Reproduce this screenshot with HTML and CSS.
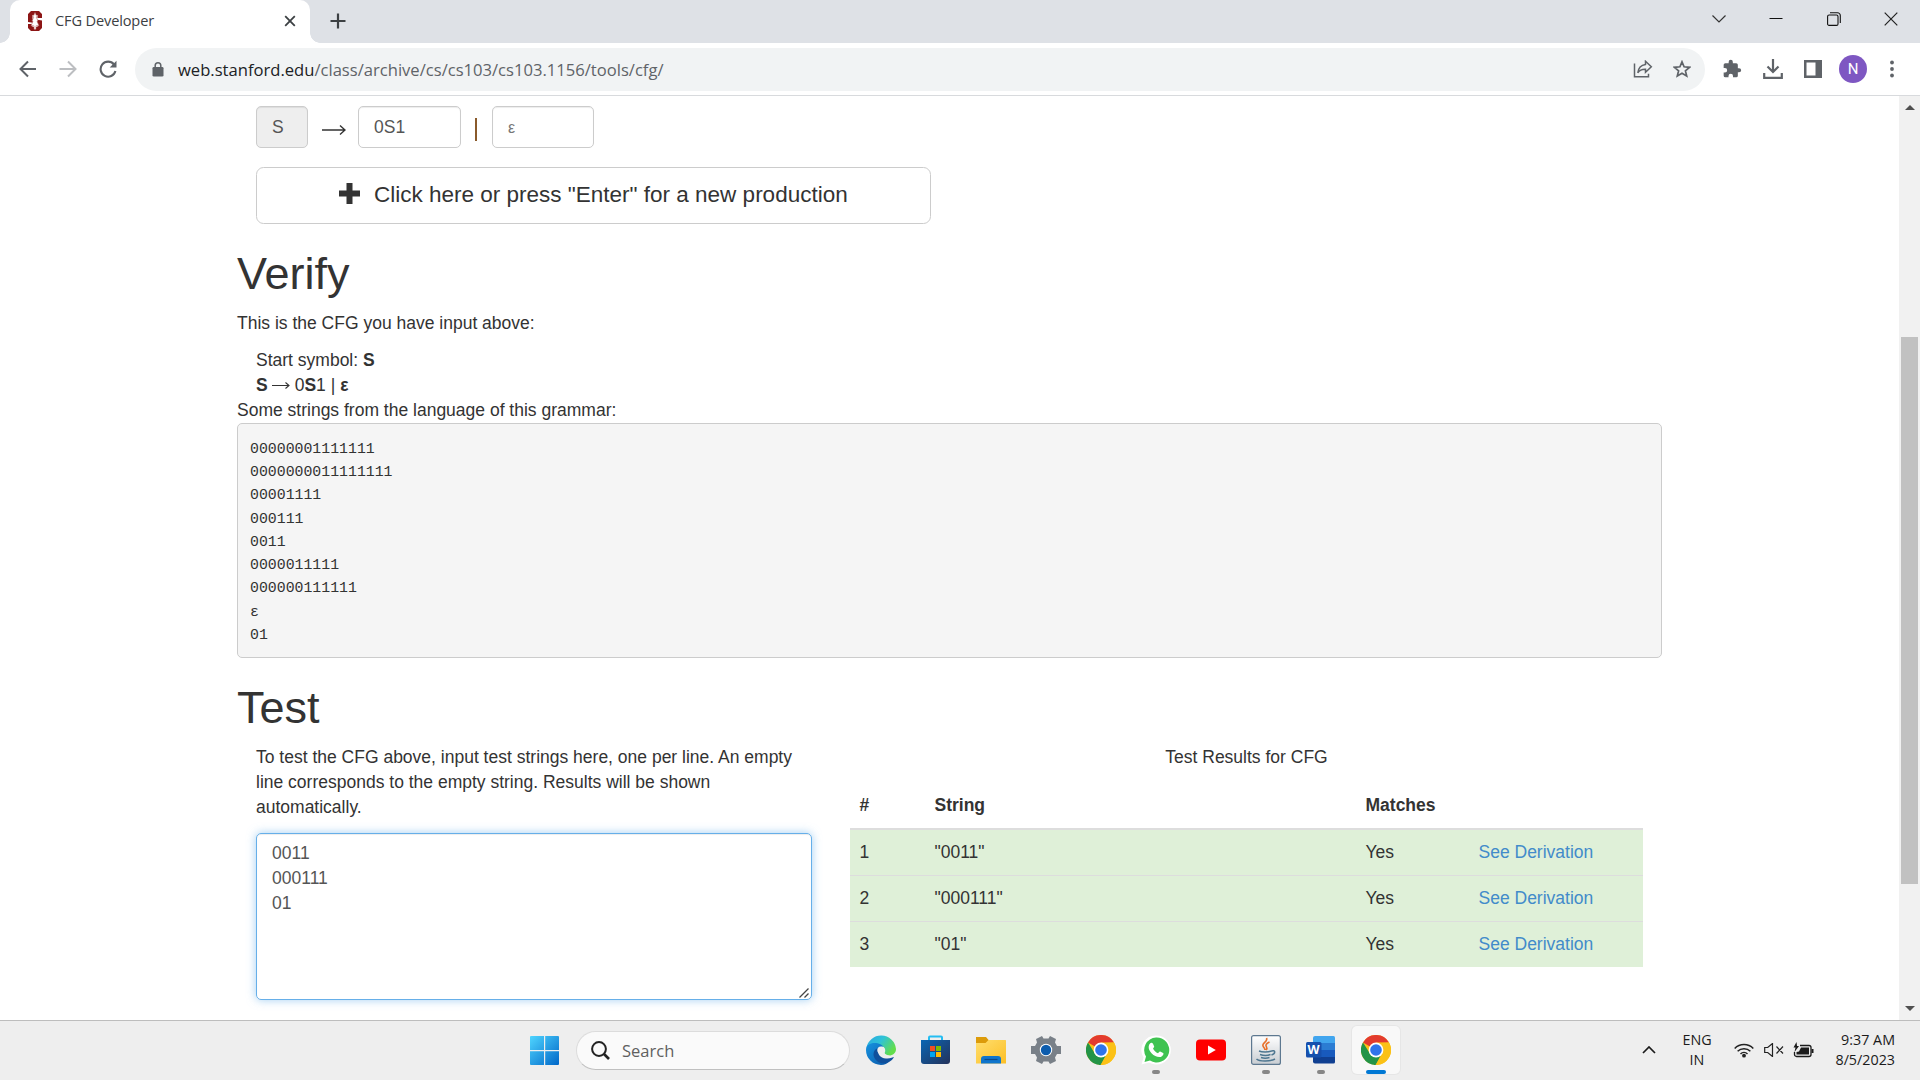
FILE: index.html
```html
<!DOCTYPE html>
<html lang="en">
<head>
<meta charset="utf-8">
<title>CFG Developer</title>
<link rel="stylesheet" href="styles.css">
</head>
<body>
<svg width="0" height="0" class="defs">
  <defs>
    <linearGradient id="win" x1="0" y1="0" x2="1" y2="1"><stop offset="0" stop-color="#4fd5ff"/><stop offset="1" stop-color="#0067c8"/></linearGradient>
    <linearGradient id="edgeTop" x1="0" y1="0" x2="1" y2=".5"><stop offset="0" stop-color="#2aa6e0"/><stop offset=".5" stop-color="#2fc2d8"/><stop offset="1" stop-color="#62dd4c"/></linearGradient>
    <linearGradient id="edgeLow" x1="0" y1="0" x2="1" y2="1"><stop offset="0" stop-color="#1593e0"/><stop offset="1" stop-color="#0c57a8"/></linearGradient>
    <linearGradient id="store" x1="0" y1="0" x2="1" y2="1"><stop offset="0" stop-color="#0a66b4"/><stop offset="1" stop-color="#24325a"/></linearGradient>
    <linearGradient id="folder" x1="0" y1="0" x2="1" y2="1"><stop offset="0" stop-color="#ffde6e"/><stop offset="1" stop-color="#fcbf25"/></linearGradient>
    <linearGradient id="java" x1="0" y1="0" x2="0" y2="1"><stop offset="0" stop-color="#ffffff"/><stop offset="1" stop-color="#c8cdd2"/></linearGradient>
    <symbol id="chrome" viewBox="0 0 30 30">
      <circle cx="15" cy="15" r="15" fill="#fbc116"/>
      <path d="M15 15 2 7.500A15 15 0 0 1 28 7.500L15 8Z" fill="#e33b2e"/>
      <path d="M2 7.500 8.900 18.500 15 22 15 30A15 15 0 0 1 2 7.500Z" fill="#239447"/>
      <path d="M21 18.500 15 30 13 30 14 20Z" fill="#239447"/>
      <path d="M21 18.500 14.500 30A15 15 0 0 0 28 7.500H15Z" fill="#fbc116"/>
      <circle cx="15" cy="15" r="7.400" fill="#fff"/><circle cx="15" cy="15" r="5.800" fill="#2f74ea"/>
    </symbol>
  </defs>
</svg>

<header class="tabstrip">
  <div class="tab">
    <svg class="favicon" width="14" height="20" viewBox="0 0 14 20"><path d="M3 0h8l3 3v4H9.500V4h-5v4L14 9.500V17l-3 3H3l-3-3v-4h4.500v3h5v-3.500L0 11V3Z" fill="#8c1515"/><path d="m7 1.500 1.800 4L8.200 6l1.800 4-1 .3 2 4.500H8v3.500H6v-3.500H3l2-4.500-1-.3L5.800 6l-.6-.5Z" fill="#fff" stroke="#b86a6a" stroke-width=".6"/></svg>
    <span class="tab-title">CFG Developer</span>
    <svg class="tab-close" width="12" height="12" viewBox="0 0 12 12"><path d="m1.200 1.200 9.600 9.600m0-9.600-9.600 9.600" stroke="#3c4043" stroke-width="1.800"/></svg>
  </div>
  <svg class="new-tab" width="16" height="16" viewBox="0 0 16 16"><path d="M8 .5v15M.5 8h15" stroke="#3c4043" stroke-width="2.200"/></svg>
  <div class="window-buttons">
    <svg width="14" height="14" viewBox="0 0 14 14"><path d="m.5 3.500 6.500 6.500 6.500-6.500" fill="none" stroke="#333" stroke-width="1.200"/></svg>
    <svg width="14" height="14" viewBox="0 0 14 14"><path d="M.5 6.500h13" stroke="#111" stroke-width="1"/></svg>
    <svg width="14" height="14" viewBox="0 0 14 14"><g fill="none" stroke="#111" stroke-width="1.100"><rect x=".6" y="3" width="10.400" height="10.400" rx="1.500"/><path d="M3 .8h7.500a2.800 2.800 0 0 1 2.800 2.800V11"/></g></svg>
    <svg width="14" height="14" viewBox="0 0 14 14"><path d="m.7.7 12.600 12.600m0-12.600L.7 13.300" stroke="#222" stroke-width="1.200"/></svg>
  </div>
</header>

<nav class="toolbar">
  <div class="nav-buttons">
    <svg width="18" height="18" viewBox="0 0 18 18"><path d="M17 9H2M9 1.500 1.500 9 9 16.500" fill="none" stroke="#5f6368" stroke-width="2"/></svg>
    <svg width="18" height="18" viewBox="0 0 18 18"><path d="M.5 9H16M9 1.500 16.500 9 9 16.500" fill="none" stroke="#bcbec1" stroke-width="2"/></svg>
    <svg width="18" height="18" viewBox="0 0 18 18"><path d="M15 4.500A7.500 7.500 0 1 0 16.400 11" fill="none" stroke="#5f6368" stroke-width="2.100"/><path d="M17.500.7V7.500H10.700Z" fill="#5f6368"/></svg>
  </div>
  <div class="omnibox">
    <svg class="lock" width="12" height="15" viewBox="0 0 12 15"><rect x=".5" y="5" width="11" height="9.500" rx="1.300" fill="#5f6368"/><path d="M3.200 6V3.600a2.800 2.800 0 0 1 5.600 0V6" fill="none" stroke="#5f6368" stroke-width="1.500"/></svg>
    <span class="url"><b>web.stanford.edu</b>/class/archive/cs/cs103/cs103.1156/tools/cfg/</span>
    <svg class="share" width="20" height="18" viewBox="0 0 20 18"><g fill="none" stroke="#5f6368" stroke-width="1.500"><path d="M1.500 3.500v13.300H15.500v-3"/><path d="M12.500 1.300 18.300 6.800 12.500 12.200V9.300C9.300 9.200 6.700 10 4.800 12.800 5.300 8.500 7.800 5 12.500 4.400Z"/></g></svg>
    <svg class="star" width="18" height="18" viewBox="0 0 18 18"><path d="m9 1.800 2.100 5 5.400.5-4.100 3.500 1.300 5.300L9 13.300l-4.700 2.800 1.300-5.300L1.500 7.300l5.400-.5Z" fill="none" stroke="#5f6368" stroke-width="1.700"/></svg>
  </div>
  <div class="actions">
    <svg width="20" height="20" viewBox="0 0 24 24"><path d="M20.500 11H19V7a2 2 0 0 0-2-2h-4V3.500a2.500 2.500 0 0 0-5 0V5H4a2 2 0 0 0-2 2v3.800h1.500a2.700 2.700 0 0 1 0 5.400H2V20a2 2 0 0 0 2 2h3.800v-1.500a2.700 2.700 0 0 1 5.400 0V22H17a2 2 0 0 0 2-2v-4h1.500a2.500 2.500 0 0 0 0-5Z" fill="#5f6368"/></svg>
    <svg width="20" height="20" viewBox="0 0 20 20"><path d="M10 0v12M4.500 7.500l5.500 5.500 5.500-5.500M1.200 14v4.800H18.800V14" fill="none" stroke="#5f6368" stroke-width="2.200"/></svg>
    <svg width="18" height="18" viewBox="0 0 18 18"><path d="M0 0h18v18H0ZM2.500 2.500v13h9v-13Z" fill="#5f6368" fill-rule="evenodd"/></svg>
    <span class="avatar">N</span>
    <svg width="4" height="18" viewBox="0 0 4 18"><g fill="#5f6368"><circle cx="2" cy="2.500" r="1.900"/><circle cx="2" cy="9" r="1.900"/><circle cx="2" cy="15.500" r="1.900"/></g></svg>
  </div>
</nav>

<div class="viewport">
  <main class="page">
    <div class="production">
      <span class="field start">S</span>
      <svg class="arrow" width="24" height="12" viewBox="0 0 24 12"><path d="M0 6h23M18 1.500 23 6l-5 4.500" fill="none" stroke="#333" stroke-width="1.400"/></svg>
      <span class="field rule">0S1</span>
      <span class="bar"></span>
      <span class="field rule empty">ε</span>
    </div>
    <div class="add">
      <svg width="21" height="21" viewBox="0 0 21 21"><path d="M7.500 0h6v7.500H21v6h-7.500V21h-6v-7.500H0v-6h7.500Z" fill="#333"/></svg>
      <span>Click here or press "Enter" for a new production</span>
    </div>

    <h1 class="heading">Verify</h1>
    <p class="intro">This is the CFG you have input above:</p>
    <div class="grammar">
      <div>Start symbol: <b>S</b></div>
      <div class="grammar-rule"><b>S</b><svg width="18" height="10" viewBox="0 0 18 10"><path d="M0 5.500h17M13.500 2.500 17 5.500l-3.500 3" fill="none" stroke="#333" stroke-width="1.100"/></svg><span>0<b>S</b>1 | <b>ε</b></span></div>
    </div>
    <div>Some strings from the language of this grammar:</div>
    <pre class="strings">00000001111111
0000000011111111
00001111
000111
0011
0000011111
000000111111
ε
01</pre>

    <h1 class="heading test-heading">Test</h1>
    <div class="columns">
      <section class="inputs">
        <p class="help">To test the CFG above, input test strings here, one per line. An empty line corresponds to the empty string. Results will be shown automatically.</p>
        <div class="textarea">0011<br>000111<br>01<svg class="grip" width="10" height="10" viewBox="0 0 10 10"><path d="M.5 9.500 9.500.5M5.500 9.500l4-4" stroke="#444" stroke-width="1.300"/></svg></div>
      </section>
      <section class="results">
        <div class="caption">Test Results for CFG</div>
        <div class="row head"><span>#</span><span>String</span><span>Matches</span><span></span></div>
        <div class="row"><span>1</span><span>"0011"</span><span>Yes</span><a>See Derivation</a></div>
        <div class="row"><span>2</span><span>"000111"</span><span>Yes</span><a>See Derivation</a></div>
        <div class="row"><span>3</span><span>"01"</span><span>Yes</span><a>See Derivation</a></div>
      </section>
    </div>
  </main>
  <div class="scrollbar">
    <svg width="10" height="5" viewBox="0 0 10 5"><path d="M0 5 5 0l5 5Z" fill="#505050"/></svg>
    <div class="thumb"></div>
    <svg class="down" width="10" height="5" viewBox="0 0 10 5"><path d="M0 0 5 5l5-5Z" fill="#505050"/></svg>
  </div>
</div>

<footer class="taskbar">
  <svg class="start-logo" width="30" height="30" viewBox="0 0 30 30"><path d="M1 0h13v14H0V1a1 1 0 0 1 1-1Zm14.200 0H28a1 1 0 0 1 1 1v13H15.200ZM0 15.200h14V29H1a1 1 0 0 1-1-1Zm15.200 0H29V28a1 1 0 0 1-1 1H15.200Z" fill="url(#win)"/></svg>
  <div class="search">
    <svg width="19" height="19" viewBox="0 0 19 19"><circle cx="8" cy="8" r="6.900" fill="none" stroke="#222" stroke-width="2"/><path d="m13 13 5 5" stroke="#222" stroke-width="2.600"/></svg>
    <span>Search</span>
  </div>
  <div class="apps">
    <span class="app"><svg width="30" height="30" viewBox="0 0 30 30"><path d="M.3 13A15 15 0 0 1 30 14c0 4-3 6.500-7 6.500-3 0-5-1-4.500-2.500 1.500-2 1-6-3-7C9 9.500 3 10 .3 13Z" fill="url(#edgeTop)"/><path d="M0 15C0 10 4 8 8.500 8c4.500 0 8 2 9 4-5-1-7 3-6 7 1 5 6 8 12 7-2 2.500-5 4-8.500 4A15 15 0 0 1 0 15Z" fill="url(#edgeLow)"/><path d="M11.500 13c-4 2-5.500 7-2 11.500C13 29 19 29 23 27c2-1 4-3 5-5-1 0-4 2-8 1.500-6-.5-9-5-8.500-10.500Z" fill="#10509c"/><circle cx="15" cy="15" r="3.600" fill="#eee"/><path d="M15 18c1 5 8 5 12.500 3.200C23 21 19 20 18 17Z" fill="#eee"/></svg></span>
    <span class="app"><svg width="30" height="30" viewBox="0 0 30 30"><path d="M8 6V2.500A1 1 0 0 1 9 1.500H20a1 1 0 0 1 1 1V6" fill="none" stroke="#24bdf2" stroke-width="2"/><path d="M0 5h29v21a3 3 0 0 1-3 3H3a3 3 0 0 1-3-3Z" fill="url(#store)"/><path d="M9 11h5v5H9Z" fill="#f25022"/><path d="M15 11h5v5h-5Z" fill="#7fba00"/><path d="M9 17h5v5H9Z" fill="#00a4ef"/><path d="M15 17h5v5h-5Z" fill="#ffb900"/></svg></span>
    <span class="app"><svg width="30" height="30" viewBox="0 0 30 30"><path d="M0 2h10l3 3.500h16a1 1 0 0 1 1 1V10H0Z" fill="#dc9b0a"/><path d="M0 8h9.500l3-3H29a1 1 0 0 1 1 1v22.500H0Z" fill="url(#folder)"/><path d="M5 28.500V24a3 3 0 0 1 3-3h14a3 3 0 0 1 3 3v4.500Z" fill="#0f75cc"/><path d="M8.500 24.500h13" stroke="#0b4a8a" stroke-width="1.200"/></svg></span>
    <span class="app"><svg width="30" height="30" viewBox="0 0 30 30"><path d="m11 1 1.500 2.500h5L19 1l6 3-1 3.500 2 3.500h4v8h-4l-2 3.500 1 3.500-6 3-1.500-2.500h-5L11 29l-6-3 1-3.500L4 19H0v-8h4l2-3.500L5 4Z" fill="#798088"/><circle cx="15" cy="15" r="6.200" fill="#fff"/><circle cx="15" cy="15" r="5.200" fill="#0c5cad"/></svg></span>
    <span class="app"><svg width="30" height="30"><use href="#chrome"/></svg></span>
    <span class="app running"><svg width="30" height="30" viewBox="0 0 30 30"><path d="M15 .5A14.500 14.500 0 1 1 8 27.500L.5 29.500l2-7A14.500 14.500 0 0 1 15 .5Z" fill="#fff"/><path d="M15 2.500A12.500 12.500 0 1 1 9 25.500L3.500 27 5 21.500A12.500 12.500 0 0 1 15 2.500Z" fill="#3fc351"/><path d="M9 8.500c1-1.300 2.300-1 3 .3l1.200 2.700c.2.700-1 1.600-1.200 2.100 1 2.200 2.800 3.800 5 4.700.7-.5 1.300-2 2.200-1.700l2.900 1.500c1 .7-.3 3.300-2.200 3.800-5.500 1.500-13-5.500-12.200-10.400.2-1.200.5-2.200 1.300-3Z" fill="#fff"/></svg></span>
    <span class="app"><svg width="30" height="30" viewBox="0 0 30 30"><rect y="4.500" width="30" height="21" rx="4" fill="#f00"/><path d="M12 10.500v9l7.800-4.500Z" fill="#fff"/></svg></span>
    <span class="app running"><svg width="30" height="30" viewBox="0 0 30 30"><rect x=".6" y=".6" width="28.800" height="28.800" rx="2" fill="url(#java)" stroke="#5d7890" stroke-width="1.200"/><path d="M15.500 3c2 3.500-5 5-3.500 8 .5 1.500 2 2 2 4M18.500 7c-3 1.500-4.500 3-3 5 1 1.500.5 2-.5 3" fill="none" stroke="#e8702a" stroke-width="1.600"/><path d="M8 16c3 1.200 9 1.200 12.500 0M9 19.500c3 1 8 1 10.500 0M10 22.500c2.500.8 6 .8 8.500 0M5.500 24c3 2.800 14 2.500 18.500 0M20.500 16c4-1.500 4.500 2.500 0 4" fill="none" stroke="#4d7690" stroke-width="1.500"/></svg></span>
    <span class="app running"><svg width="30" height="30" viewBox="0 0 30 30"><path d="M7 8V3a2 2 0 0 1 2-2h18.500A1.500 1.500 0 0 1 29 2.500V8Z" fill="#41a5ee"/><path d="M7 8h22v7H7Z" fill="#2b7cd3"/><path d="M7 15h22v7H7Z" fill="#185abd"/><path d="M7 22h22v5a1.500 1.500 0 0 1-1.500 1.500H9a2 2 0 0 1-2-2Z" fill="#103f91"/><rect y="7" width="15.500" height="15.500" rx="1.500" fill="#1650ad"/><text x="7.600" y="18.800" class="word-letter">W</text></svg></span>
    <span class="app running active"><svg width="30" height="30"><use href="#chrome"/></svg></span>
  </div>
  <div class="tray">
    <svg class="caret" width="14" height="8" viewBox="0 0 14 8"><path d="m1 7 6-6 6 6" fill="none" stroke="#1b1b1b" stroke-width="1.700"/></svg>
    <div class="lang">ENG<br>IN</div>
    <svg class="wifi" width="20" height="16" viewBox="0 0 20 16"><g fill="none" stroke="#222" stroke-width="1.500"><path d="M.7 6.500a13 13 0 0 1 18.600 0M3.600 9.300a9 9 0 0 1 12.800 0M6.500 12a5 5 0 0 1 7 0"/></g><circle cx="10" cy="13.700" r="1.900" fill="#222"/></svg>
    <svg class="volume" width="20" height="14" viewBox="0 0 20 14"><path d="M.7 4.500h3l4.800-4v13l-4.800-4h-3ZM12.500 3.500l6.500 7m0-7-6.500 7" fill="none" stroke="#222" stroke-width="1.200"/></svg>
    <svg class="battery" width="21" height="16" viewBox="0 0 21 16"><path d="M7 3.500h9a2 2 0 0 1 2 2v7a2 2 0 0 1-2 2H3.500a2 2 0 0 1-2-2V10" fill="none" stroke="#1b1b1b" stroke-width="1.300"/><path d="M8 5.500h8v7H3.500V10L6 9.500ZM18.500 7H20.500v4h-2Z" fill="#1b1b1b"/><path d="M3.500 0 .5 5.500h2L1.500 10 6 4H4Z" fill="#1b1b1b"/></svg>
    <div class="clock">9:37 AM<br>8/5/2023</div>
  </div>
</footer>
</body>
</html>
```
FILE: styles.css
```css
* { box-sizing: border-box; }
body {
  margin: 0;
  width: 1920px;
  height: 1080px;
  overflow: hidden;
  display: flex;
  flex-direction: column;
  font-family: "Liberation Sans", Arial, sans-serif;
  font-size: 17.5px;
  line-height: 25px;
  color: #333;
  background: #fff;
}
svg { display: block; flex: none; }
.defs { position: absolute; }

/* Browser chrome */
.tabstrip {
  height: 43px;
  flex: none;
  display: flex;
  align-items: center;
  background: #dee1e6;
  padding-left: 10px;
  font-family: "Open Sans", sans-serif;
}
.tab {
  position: relative;
  width: 300px;
  height: 43px;
  display: flex;
  align-items: center;
  padding: 0 14px 1px 18px;
  background: #fff;
  border-radius: 10px 10px 0 0;
}
.tab::before,
.tab::after {
  content: "";
  position: absolute;
  bottom: 0;
  width: 10px;
  height: 10px;
}
.tab::before { left: -10px; background: radial-gradient(circle at 0 0, #dee1e6 9.5px, #fff 10px); }
.tab::after { right: -10px; background: radial-gradient(circle at 100% 0, #dee1e6 9.5px, #fff 10px); }
.tab-title { margin: -1px 0 0 13px; flex: 1; font-size: 14.6px; letter-spacing: -.15px; color: #3c4043; }
.new-tab { margin: 0 0 1px 19.5px; }
.window-buttons { margin-left: auto; display: flex; gap: 43.5px; padding: 0 22px 5px 0; }

.toolbar {
  height: 53px;
  flex: none;
  display: flex;
  align-items: center;
  padding-left: 19px;
  border-bottom: 1px solid #d8dadd;
  font-family: "Open Sans", sans-serif;
}
.nav-buttons { display: flex; gap: 22px; width: 116px; }
.omnibox {
  width: 1570px;
  height: 43px;
  display: flex;
  align-items: center;
  padding: 0 14px 0 17px;
  border-radius: 22px;
  background: #f1f3f4;
}
.url { margin-left: 14px; flex: 1; font-size: 16.6px; color: #5f6368; white-space: nowrap; }
.url b { font-weight: 400; color: #202124; }
.star { margin-left: 20px; }
.actions { display: flex; align-items: center; margin-left: 17px; }
.actions svg:nth-child(2) { margin-left: 21px; }
.actions svg:nth-child(3) { margin-left: 21px; }
.avatar {
  width: 28px;
  height: 28px;
  margin: 0 23px 0 17px;
  border-radius: 50%;
  background: #7e57c2;
  color: #fff;
  font: 15px/28px Roboto, sans-serif;
  text-align: center;
}

/* Page */
.viewport { height: 924px; flex: none; display: flex; }
.page { width: 1899px; padding: 9.5px 237px 0; }
.production { display: flex; align-items: center; margin-left: 19px; height: 43px; }
.field {
  height: 42.5px;
  padding: 0 15px;
  border: 1px solid #ccc;
  border-radius: 5px;
  box-shadow: inset 0 1px 1px rgba(0,0,0,.075);
  color: #555;
  line-height: 41px;
}
.start { width: 52px; background: #eee; }
.arrow { margin: 5px 12.5px 0 13.5px; }
.rule { width: 103px; }
.bar { width: 2px; height: 23px; margin: 4px 15px 0 14px; background: #8a5a2b; }
.empty { width: 102px; font-size: 16px; color: #777; }
.add {
  display: flex;
  align-items: center;
  width: 675px;
  height: 57px;
  margin: 18px 0 0 19px;
  padding: 0 0 2px 82px;
  border: 1px solid #ccc;
  border-radius: 7.5px;
  font-size: 22.5px;
}
.add svg { margin-bottom: 1px; }
.add span { margin-left: 14px; }
.heading { margin: 25px 0 12.5px; font-size: 45px; font-weight: 400; line-height: 49.5px; }
.intro { margin: 0 0 12px; }
.grammar { margin-left: 19px; }
.grammar-rule { display: flex; align-items: center; gap: 4.5px; }
.strings {
  height: 235px;
  margin: 0;
  padding: 14.4px 12px 0;
  border: 1px solid #ccc;
  border-radius: 5px;
  background: #f5f5f5;
  font: 14.85px/23.25px "Liberation Mono", monospace;
}
.test-heading { margin-bottom: 13px; }
.columns { display: flex; padding-left: 19px; }
.inputs { width: 556px; }
.help { margin: 0 0 12.5px; }
.textarea {
  position: relative;
  height: 167px;
  padding: 7px 15px;
  border: 1px solid #66afe9;
  border-radius: 5px;
  box-shadow: inset 0 1px 1px rgba(0,0,0,.075), 0 0 10px rgba(102,175,233,.6);
  color: #555;
}
.grip { position: absolute; right: 2px; bottom: 1px; }
.results { width: 793px; margin-left: 38px; }
.caption { height: 38px; text-align: center; }
.row {
  display: grid;
  grid-template-columns: 75px 431px 113px 1fr;
  height: 46px;
  padding: 10px 9.5px;
  border-top: 1px solid #ddd;
  background: #dff0d8;
}
.row:nth-child(3) { height: 45px; border-top: 0; }
.row a { color: #428bca; }
.head { height: 47px; background: #fff; border-top: 0; border-bottom: 2px solid #ddd; font-weight: 700; }

.scrollbar {
  width: 21px;
  display: flex;
  flex-direction: column;
  align-items: center;
  padding: 9px 0;
  background: #f1f1f1;
}
.thumb { width: 17px; height: 547px; margin-top: 227px; background: #c1c1c1; }
.down { margin-top: auto; }

/* Taskbar */
.taskbar {
  height: 60px;
  flex: none;
  display: flex;
  align-items: center;
  padding: 0 0 1px 530px;
  border-top: 1px solid #bdbdbd;
  background: #eee;
  font-family: "Open Sans", sans-serif;
}
.start-logo { margin-top: 1px; }
.search {
  display: flex;
  align-items: center;
  width: 274px;
  height: 39px;
  margin-left: 16px;
  padding-left: 14px;
  border: 1px solid #dcdcdc;
  border-bottom-color: #c0c0c0;
  border-radius: 20px;
  background: #fafafa;
  font-size: 16.5px;
  color: #606060;
}
.search span { margin-left: 12px; }
.apps { display: flex; gap: 7px; margin-left: 7px; }
.app {
  position: relative;
  width: 48px;
  height: 48px;
  padding: 9px;
  border-radius: 5px;
}
.running::after {
  content: "";
  position: absolute;
  left: 20px;
  bottom: 0;
  width: 8px;
  height: 4px;
  border-radius: 2px;
  background: #868686;
}
.active { background: #f8f8f8; box-shadow: 0 0 0 1px #e6e6e6; }
.active::after { left: 14px; width: 20px; background: #0078d4; }
.word-letter { font: 700 12.5px "Open Sans", sans-serif; fill: #fff; text-anchor: middle; }
.tray {
  margin-left: auto;
  display: flex;
  align-items: center;
  padding-right: 25px;
  font-size: 14.3px;
  line-height: 20px;
  color: #1b1b1b;
}
.lang { width: 40px; margin-left: 21px; text-align: center; }
.wifi { margin-left: 17px; }
.volume { margin-left: 10px; }
.battery { margin-left: 9px; }
.clock { width: 81px; text-align: right; white-space: nowrap; }
```
